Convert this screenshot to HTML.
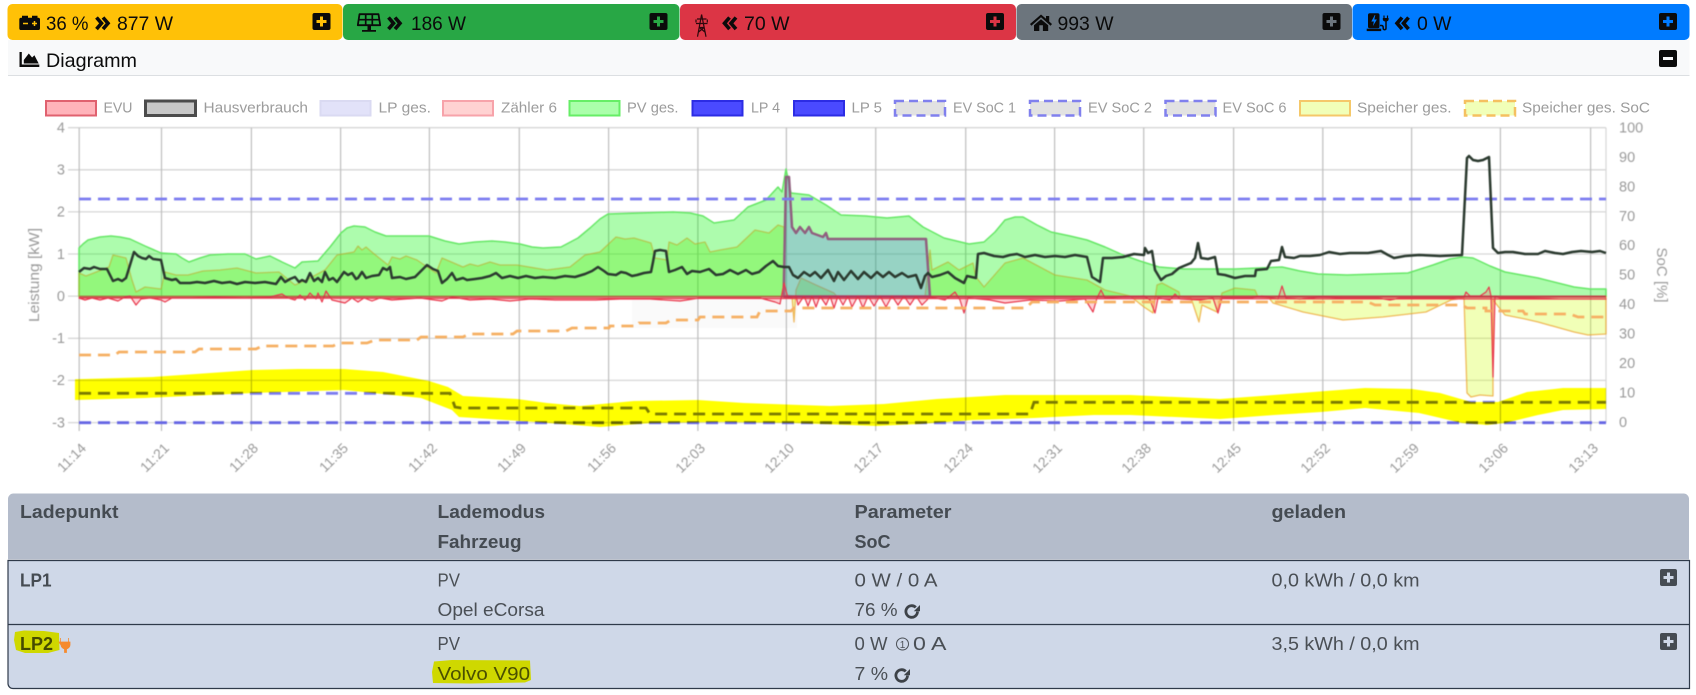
<!DOCTYPE html>
<html lang="de">
<head>
<meta charset="utf-8">
<title>Diagramm</title>
<style>
html,body{margin:0;padding:0;background:#fff;width:1696px;height:695px;overflow:hidden}
svg{display:block}
text{font-family:"Liberation Sans",Arial,"DejaVu Sans",sans-serif}
.bar{font-size:19.5px;fill:#0b0b0b}
.lg{font-size:14.5px;fill:#9c9c9c}
.ax{font-size:14.5px;fill:#9a9a9a}
.xl{font-size:14px;fill:#9a9a9a}
.th{font-size:18px;font-weight:bold;fill:#454b52}
.td{font-size:18px;fill:#4a4f55}
.tb{font-size:18px;font-weight:bold;fill:#454b52}
.mul{mix-blend-mode:multiply}
</style>
</head>
<body>
<svg width="1696" height="695" viewBox="0 0 1696 695" xmlns="http://www.w3.org/2000/svg">
<defs>
<clipPath id="pos"><rect x="70" y="120" width="1540" height="176.500"/></clipPath>
<clipPath id="neg"><rect x="70" y="296.500" width="1540" height="130"/></clipPath>
<path id="sp" stroke-width="1.300" stroke-linejoin="round" d="M79 296.500V273L86 276L109 267L113 255L126 258L132 280L136 292L145 287L161 289L165 272L176 275L188 275L203 271L220 270L237 268L256 273L279 272L295 285L310 278L325 270L337 255L354 252L358 246L362 250L366 247L373 253L388 265L392 257L400 259L406 256L417 260L436 273L442 258L463 267L470 264L478 266L490 262L500 265L517 265L547 270L570 267L585 255L600 252L616 237L625 239L634 238L651 243L655 258L667 260L669 242L677 245L687 238L695 244L705 242L710 252L720 250L737 247L755 230L769 233L778 225L784 227L785 295L792 296L794 322L796 290L801 278L816 285L834 293L837 296.500L925 296.500L930 250L932 270L948 262L959 270L973 263L976 277L984 287L1005 263L1023 258L1055 275L1087 280L1105 290L1130 296L1144 307L1153 313L1157 285L1162 283L1179 292L1180 297L1191 298L1199 322L1202 305L1217 312L1222 293L1235 288L1255 290L1258 297L1269 298L1273 303L1303 312L1343 320L1383 317L1426 312L1451 300L1464 298L1467 393L1471 397L1480 395L1493 396L1493 300L1505 315L1525 319L1538 322L1574 332L1588 335L1606 334V296.500Z"/>
</defs>
<rect width="1696" height="695" fill="#fff"/>

<!-- top bars -->
<rect x="7.5" y="4" width="335" height="36" rx="5" fill="#ffc107"/>
<rect x="343" y="4" width="336.5" height="36" rx="5" fill="#28a745"/>
<rect x="680" y="4" width="336" height="36" rx="5" fill="#dc3545"/>
<rect x="1016.5" y="4" width="335.5" height="36" rx="5" fill="#6c757d"/>
<rect x="1352.5" y="4" width="337" height="36" rx="5" fill="#007bff"/>

<!-- battery icon -->
<path d="M22 15.700h6v2.500h-6zM32 15.700h5.500v2.500h-5.500z" fill="#0b0b0b"/>
<rect x="19.300" y="17.700" width="20.700" height="12.300" rx="1.800" fill="#0b0b0b"/>
<path d="M23 23.500h5M32 23.500h5M34.500 21v5" stroke="#ffc107" stroke-width="1.500" fill="none"/>
<text class="bar" x="46" y="30" textLength="42.5" lengthAdjust="spacingAndGlyphs">36 %</text>
<path d="M96.500 17.500l5 5.800-5 5.800M103 17.500l5 5.800-5 5.800" stroke="#0b0b0b" stroke-width="3.600" fill="none"/>
<text class="bar" x="117" y="30" textLength="56" lengthAdjust="spacingAndGlyphs">877 W</text>

<!-- solar icon -->
<path d="M359.500 14.200h19l1.700 11h-22.400z" fill="none" stroke="#0b0b0b" stroke-width="1.800" stroke-linejoin="round"/>
<path d="M358.500 19.700h21M365.700 14v11M372.300 14v11" stroke="#0b0b0b" stroke-width="1.700" fill="none"/>
<path d="M367.500 26h3.500v4h-3.500zM362 30h14v1.800h-14z" fill="#0b0b0b"/>
<path d="M388.500 17.500l5 5.800-5 5.800M395 17.500l5 5.800-5 5.800" stroke="#0b0b0b" stroke-width="3.600" fill="none"/>
<text class="bar" x="411" y="30" textLength="55" lengthAdjust="spacingAndGlyphs">186 W</text>

<!-- tower icon -->
<path d="M701.600 14.500L697.500 36.700M701.600 14.500L706 36.700M697 19h9.500M696 23.500h11.500M696 19.500v3M707.300 19.500v3M699.500 27.500h4.500M699.500 27.500l6 5M704 27.500l-6 5" stroke="#2b080c" stroke-width="1.200" fill="none"/>
<path d="M729.500 17.500l-5 5.800 5 5.800M736 17.500l-5 5.800 5 5.800" stroke="#0b0b0b" stroke-width="3.600" fill="none"/>
<text class="bar" x="744" y="30" textLength="45.500" lengthAdjust="spacingAndGlyphs">70 W</text>

<!-- home icon -->
<path d="M1041 14.500l5 4.300V16h3.200v5.500l2.800 2.500-1.400 1.700L1041 17.300 1031.400 25.700 1030 24z" fill="#0b0b0b"/>
<path d="M1041 19.300l-7 6V31h5.300v-5.800h3.600V31h5.300v-5.700z" fill="#0b0b0b"/>
<text class="bar" x="1057.500" y="30" textLength="56" lengthAdjust="spacingAndGlyphs">993 W</text>

<!-- charging station icon -->
<rect x="1368" y="13.300" width="11.500" height="15" rx="1.800" fill="#0b0b0b"/>
<rect x="1366.700" y="28.700" width="14.500" height="2.400" fill="#0b0b0b"/>
<path d="M1374.800 15l-3.500 6.500h2.600l-1 4.500 4-6.500h-2.600l1-4.500z" fill="#007bff"/>
<path d="M1380 25.500h1.500c1.300 0 1.700 1 1.700 2v.8c0 1.900 2.800 1.900 2.800 0V21" stroke="#0b0b0b" stroke-width="1.500" fill="none"/>
<path d="M1384 15.500v2.500M1387.500 15.500v2.500" stroke="#0b0b0b" stroke-width="1.200" fill="none"/>
<path d="M1382.800 18h5.800v1.500c0 1-1.200 2-2.900 2s-2.900-1-2.900-2z" fill="#0b0b0b"/>
<path d="M1402 17.500l-5 5.800 5 5.800M1408.500 17.500l-5 5.800 5 5.800" stroke="#0b0b0b" stroke-width="3.600" fill="none"/>
<text class="bar" x="1417" y="30" textLength="34.500" lengthAdjust="spacingAndGlyphs">0 W</text>

<!-- plus buttons -->
<g>
<rect x="312.500" y="13" width="18" height="17" rx="2" fill="#0b0b0b"/><path d="M321.500 16.500v10M316.500 21.500h10" stroke="#ffc107" stroke-width="3"/>
<rect x="649.500" y="13" width="18" height="17" rx="2" fill="#0b0b0b"/><path d="M658.500 16.500v10M653.500 21.500h10" stroke="#28a745" stroke-width="3"/>
<rect x="986" y="13" width="18" height="17" rx="2" fill="#0b0b0b"/><path d="M995 16.500v10M990 21.500h10" stroke="#dc3545" stroke-width="3"/>
<rect x="1322.500" y="13" width="18" height="17" rx="2" fill="#0b0b0b"/><path d="M1331.500 16.500v10M1326.500 21.500h10" stroke="#6c757d" stroke-width="3"/>
<rect x="1659" y="13" width="18" height="17" rx="2" fill="#0b0b0b"/><path d="M1668 16.500v10M1663 21.500h10" stroke="#007bff" stroke-width="3"/>
</g>

<!-- Diagramm header -->
<rect x="8" y="40" width="1681.500" height="35" fill="#f8f9fa"/>
<rect x="8" y="75" width="1681.500" height="1" fill="#dcdfe2"/>
<path d="M19.500 52h2.300v12.500h17.500V67H19.500z" fill="#0b0b0b"/>
<path d="M23.800 63.500v-3.500l5-6.500 3.300 4 2.300-2.200 4.300 8.200z" fill="#0b0b0b"/>
<text x="46" y="67" font-size="19.500" fill="#0b0b0b" textLength="91" lengthAdjust="spacingAndGlyphs">Diagramm</text>
<rect x="1659" y="50" width="18" height="17" rx="2" fill="#0b0b0b"/>
<path d="M1663 58.500h10" stroke="#f8f9fa" stroke-width="3"/>

<g style="filter:blur(.3px)">
<!-- legend -->
<g stroke-width="2">
<rect x="46" y="101" width="50" height="14.500" fill="#ffb3ba" stroke="#e0616f"/>
<rect x="145.500" y="101" width="50" height="14.500" fill="#c8c8c8" stroke="#4c4c4c" stroke-width="3"/>
<rect x="320.500" y="101" width="50" height="14.500" fill="#e2e2f9" stroke="#dadaf2"/>
<rect x="443" y="101" width="50" height="14.500" fill="#ffd2d2" stroke="#f7a3aa"/>
<rect x="569.500" y="101" width="50" height="14.500" fill="#aaffaa" stroke="#66ee66"/>
<rect x="692.500" y="101" width="50" height="14.500" fill="#4a4aff" stroke="#2c2ce4"/>
<rect x="794" y="101" width="50" height="14.500" fill="#4a4aff" stroke="#2c2ce4"/>
<rect x="895" y="101" width="50" height="14.500" fill="#e2e2e2" stroke="#8080ee" stroke-dasharray="9 5" stroke-width="2.500"/>
<rect x="1030" y="101" width="50" height="14.500" fill="#e2e2e2" stroke="#8080ee" stroke-dasharray="9 5" stroke-width="2.500"/>
<rect x="1165.500" y="101" width="50" height="14.500" fill="#e2e2e2" stroke="#8080ee" stroke-dasharray="9 5" stroke-width="2.500"/>
<rect x="1300" y="101" width="50" height="14.500" fill="#f1ffb8" stroke="#f5c86a"/>
<rect x="1465" y="101" width="50" height="14.500" fill="#f1ffb8" stroke="#f5c060" stroke-dasharray="9 5" stroke-width="2.500"/>
</g>
<g class="lg">
<text class="lg" x="103.500" y="112.500" textLength="29" lengthAdjust="spacingAndGlyphs">EVU</text>
<text class="lg" x="203.500" y="112.500" textLength="104.500" lengthAdjust="spacingAndGlyphs">Hausverbrauch</text>
<text class="lg" x="378.500" y="112.500" textLength="52.500" lengthAdjust="spacingAndGlyphs">LP ges.</text>
<text class="lg" x="501" y="112.500" textLength="56" lengthAdjust="spacingAndGlyphs">Zähler 6</text>
<text class="lg" x="627" y="112.500" textLength="51.500" lengthAdjust="spacingAndGlyphs">PV ges.</text>
<text class="lg" x="751" y="112.500" textLength="29" lengthAdjust="spacingAndGlyphs">LP 4</text>
<text class="lg" x="851.500" y="112.500" textLength="30.500" lengthAdjust="spacingAndGlyphs">LP 5</text>
<text class="lg" x="953" y="112.500" textLength="63" lengthAdjust="spacingAndGlyphs">EV SoC 1</text>
<text class="lg" x="1088" y="112.500" textLength="64" lengthAdjust="spacingAndGlyphs">EV SoC 2</text>
<text class="lg" x="1222.500" y="112.500" textLength="64" lengthAdjust="spacingAndGlyphs">EV SoC 6</text>
<text class="lg" x="1357" y="112.500" textLength="94.500" lengthAdjust="spacingAndGlyphs">Speicher ges.</text>
<text class="lg" x="1522" y="112.500" textLength="128" lengthAdjust="spacingAndGlyphs">Speicher ges. SoC</text>
</g>
</g>

<!-- chart -->
<g style="filter:blur(.4px)">
<rect x="632" y="300" width="165" height="28" fill="#fafafa"/>
<!-- grid -->
<g stroke="#d6d6d6" stroke-width="1.300" fill="none">
<path d="M68 127.700H1606M68 169.800H1606M68 211.900H1606M68 254H1606M68 296.100H1606M68 338.300H1606M68 380.400H1606M68 422.600H1606"/>
</g>
<g stroke="#bdbdbd" stroke-width="1.200" fill="none">
<path d="M79.200 127.700V431M161.500 127.700V431M251.400 127.700V431M340.600 127.700V431M429.400 127.700V431M519.300 127.700V431M608.600 127.700V431M697.900 127.700V431M786.400 127.700V431M875.700 127.700V431M965.700 127.700V431M1054.600 127.700V431M1143.700 127.700V431M1233.600 127.700V431M1322.800 127.700V431M1411.600 127.700V431M1500.400 127.700V431M1590.600 127.700V431"/>
<path d="M1606 127.700V422.600" stroke="#d6d6d6"/>
</g>

<!-- PV -->
<path fill="rgba(0,245,0,.32)" stroke="#66e766" stroke-width="1.500" stroke-linejoin="round" d="M79 296.500V248L83 244L88 240L100 237L111 236L120 237L130 239L145 246L161 253L176 254L182 258L189 262L200 258L210 255L228 254L245 254L256 259L270 256L282 262L295 268L302 262L318 261L330 247L341 233L347 228L354 226L365 227L375 232L386 236L405 236L429 236L445 241L459 244L475 242L492 241L505 242L520 244L532 247L543 248L561 247L578 238L590 228L600 219L608 214L640 213L673 212L690 213L703 216L714 223L734 220L748 207L766 200L778 187L782 192L786 169L791 193L809 195L826 205L841 215L866 216L887 218L909 216L923 227L944 238L969 244L984 242L995 232L1005 220L1015 217L1023 217L1037 225L1051 232L1070 236L1087 240L1105 247L1123 255L1140 261L1159 267L1184 269L1235 269L1282 267L1300 271L1318 274L1347 275L1408 273L1433 265L1450 259L1462 257L1473 258L1490 266L1505 272L1538 278L1574 287L1590 289L1606 289V296.500Z"/>

<!-- Speicher: positive part greener, negative part pale yellow -->
<use href="#sp" clip-path="url(#pos)" fill="rgba(90,235,20,.32)" stroke="rgba(190,170,40,.6)"/>
<use href="#sp" clip-path="url(#neg)" fill="rgba(208,255,18,.3)" stroke="rgba(235,160,40,.72)"/>

<!-- LP area -->
<path fill="rgba(90,100,255,.27)" stroke="#90607f" stroke-width="2.500" stroke-linejoin="round" d="M783.600 296.500L786 177L789 177L792 227L796 233L800 227L805 233L809 227L812 233L823 237L826 233L828 239L926 239L930 296.500Z"/>
<path d="M784 296.500H930" stroke="#4a4ad8" stroke-width="1.200" fill="none"/>

<!-- EVU -->
<path fill="rgba(255,80,100,.25)" stroke="#e8384c" stroke-width="1.200" stroke-linejoin="round" d="M79 298L85 300L92 298L100 300L108 298L118 301L125 297L130 296L136 305L141 299L150 298L161 300L165 302L172 298L190 298L215 297L245 298L270 297L282 294L288 298L295 300L300 295L305 300L310 293L316 299L318 293L322 302L326 291L332 300L345 303L352 298L358 302L364 298L372 301L380 298L392 300L420 298L442 301L452 297L470 300L490 299L510 301L530 299L555 300L596 300L620 299L650 299L680 301L700 298L760 298L775 302L780 304L784 283L788 298L796 296L798 305L804 296L808 306L812 296L816 307L820 296L826 305L830 296L834 308L838 296L843 305L848 296L852 307L858 296L863 308L868 296L874 306L880 296L886 307L892 296L898 305L904 296L910 305L916 296L922 305L930 297L945 300L955 292L960 300L964 313L968 298L990 300L1005 303L1030 300L1060 301L1085 299L1093 312L1097 298L1101 290L1105 298L1120 297L1144 296L1150 300L1155 313L1158 298L1170 300L1175 294L1180 299L1200 300L1213 298L1218 313L1222 298L1250 298L1262 296L1278 299L1282 286L1286 298L1300 299L1320 297L1345 298L1378 298L1390 300L1400 298L1450 298L1464 297L1466 292L1470 296L1480 296L1486 292L1489 287L1491 296L1493 377L1495 296L1500 298L1530 298L1560 299L1606 299Z"/>
<path d="M79 296.700H784" stroke="#c43049" stroke-width="1.900" opacity=".65" fill="none"/>
<path d="M784 296.700H1606" stroke="#c43049" stroke-width="2.300" opacity=".85" fill="none"/>

<!-- Orange SoC dashed -->
<path fill="none" stroke="#f6b063" stroke-width="2.800" stroke-dasharray="12 7" d="M79 355H115L119 352H195L199 349H256L262 346H333L339 343H367L375 340H417L421 337H463L469 334H513L517 331H566L572 328H609L610 326H637L639 323H666L671 320H698L700 317H734H757L760 311H791L794 308H962H1026L1032 302H1130H1289L1301 302H1368L1375 305H1462L1467 308H1486V311H1523L1525 314H1570L1578 317H1606"/>

<!-- EV SoC dashed -->
<g fill="none" stroke="#7b7bf0" stroke-width="2.800" stroke-dasharray="12 7">
<path d="M79 199H1606"/>
<path d="M79 393.300H450L455 407L461 408H646L650 414H1030L1034 402.300H1606"/>
<path d="M79 422.700H1606" stroke="#6565e4"/>
</g>

<!-- Hausverbrauch -->
<path fill="none" stroke="#2b3a2f" stroke-width="2.500" stroke-linejoin="round" d="M79 272L84 268L90 269L94 267L100 269L107 269L113 281L118 279L122 281L126 278L130 265L134 252L138 256L142 258L146 259L149 256L153 259L161 260L165 278L172 280L176 279L180 283L190 283L197 282L205 283L214 281L222 283L230 282L237 284L245 282L255 283L265 282L276 284L281 277L285 282L290 279L295 277L299 282L302 280L306 282L310 273L314 281L318 278L322 282L325 272L329 280L333 278L337 282L344 272L348 275L352 273L356 279L358 278L362 272L366 278L372 276L379 275L383 268L387 270L390 267L392 278L400 277L406 279L415 277L422 270L427 265L433 269L438 271L442 283L447 279L452 273L456 280L463 278L467 280L475 279L482 278L490 276L496 273L502 278L510 276L518 278L526 276L535 278L543 277L555 278L565 276L575 277L585 274L592 271L598 267L604 271L608 274L616 275L621 272L626 273L632 276L637 275L644 273L651 272L653 262L655 251L660 250L666 251L669 272L675 270L682 267L687 274L692 271L700 272L709 269L716 275L723 274L730 270L738 274L746 270L752 274L759 272L766 266L773 261L778 266L784 267L789 267L793 275L798 278L804 272L810 276L815 272L821 278L828 270L834 281L838 272L844 280L851 271L858 279L864 272L871 278L877 272L883 277L889 272L895 277L902 273L908 277L916 275L921 288L925 276L928 273L932 277L940 275L948 272L955 278L964 283L967 276L976 278L978 254L984 253L994 256L1003 257L1010 255L1017 254L1025 257L1035 255L1045 257L1055 256L1065 257L1075 255L1087 257L1092 277L1100 282L1103 258L1112 258L1123 257L1134 254L1144 255L1145 248L1148 253L1152 251L1155 270L1161 280L1166 276L1172 274L1179 268L1191 263L1195 258L1198 243L1201 258L1208 259L1215 257L1218 274L1225 275L1235 278L1245 276L1255 276L1256 270L1267 269L1271 261L1279 260L1282 247L1285 257L1294 258L1300 256L1310 256L1320 255L1329 252L1340 254L1350 253L1368 253L1381 251L1388 255L1394 258L1405 256L1419 255L1440 256L1462 255L1467 158L1469 156L1473 160L1478 161L1483 160L1489 157L1493 248L1498 253L1505 252L1513 252L1525 254L1538 254L1545 251L1555 253L1563 254L1572 252L1581 251L1592 252L1600 251L1606 253"/>

<!-- yellow highlight band -->
<path class="mul" fill="#ffff00" d="M75 379.300L153 377L253 370L298 369L344 369L383 372L429 381L448 387L463 396L517 399L547 403L580 406L634 401L698 400L744 403L830 406L884 404L937 399L1005 395L1130 395L1220 399L1274 395L1365 388L1412 389L1440 393L1471 402L1498 402L1527 392L1563 388L1606 388V409L1563 410L1538 415L1505 423L1487 425L1462 423L1419 413L1365 408L1321 412L1274 415L1220 419L1130 415L1094 415L1034 418L973 420L919 424L876 426L794 423L723 422L651 423L600 427L536 422L459 417L452 410L421 398L344 390L253 393L145 398L75 400Z"/>

<!-- axis labels -->
<g class="ax">
<text class="ax" x="65" y="132.500" text-anchor="end">4</text>
<text class="ax" x="65" y="174.500" text-anchor="end">3</text>
<text class="ax" x="65" y="216.500" text-anchor="end">2</text>
<text class="ax" x="65" y="259" text-anchor="end">1</text>
<text class="ax" x="65" y="301" text-anchor="end">0</text>
<text class="ax" x="65" y="343" text-anchor="end">-1</text>
<text class="ax" x="65" y="385" text-anchor="end">-2</text>
<text class="ax" x="65" y="427.500" text-anchor="end">-3</text>
<text class="ax" x="1619" y="132.500">100</text>
<text class="ax" x="1619" y="162">90</text>
<text class="ax" x="1619" y="191.500">80</text>
<text class="ax" x="1619" y="221">70</text>
<text class="ax" x="1619" y="250">60</text>
<text class="ax" x="1619" y="279.500">50</text>
<text class="ax" x="1619" y="309">40</text>
<text class="ax" x="1619" y="338.500">30</text>
<text class="ax" x="1619" y="368">20</text>
<text class="ax" x="1619" y="397.500">10</text>
<text class="ax" x="1619" y="427">0</text>
<text class="ax" transform="translate(39,275) rotate(-90)" text-anchor="middle" textLength="94" lengthAdjust="spacingAndGlyphs">Leistung [kW]</text>
<text class="ax" transform="translate(1657,275) rotate(90)" text-anchor="middle" textLength="55" lengthAdjust="spacingAndGlyphs">SoC [%]</text>
</g>
<g>
<text class="xl" text-anchor="end" transform="translate(87,449) rotate(-45)">11:14</text>
<text class="xl" text-anchor="end" transform="translate(170,449) rotate(-45)">11:21</text>
<text class="xl" text-anchor="end" transform="translate(259,449) rotate(-45)">11:28</text>
<text class="xl" text-anchor="end" transform="translate(349,449) rotate(-45)">11:35</text>
<text class="xl" text-anchor="end" transform="translate(438,449) rotate(-45)">11:42</text>
<text class="xl" text-anchor="end" transform="translate(527,449) rotate(-45)">11:49</text>
<text class="xl" text-anchor="end" transform="translate(617,449) rotate(-45)">11:56</text>
<text class="xl" text-anchor="end" transform="translate(706,449) rotate(-45)">12:03</text>
<text class="xl" text-anchor="end" transform="translate(795,449) rotate(-45)">12:10</text>
<text class="xl" text-anchor="end" transform="translate(884,449) rotate(-45)">12:17</text>
<text class="xl" text-anchor="end" transform="translate(974,449) rotate(-45)">12:24</text>
<text class="xl" text-anchor="end" transform="translate(1063,449) rotate(-45)">12:31</text>
<text class="xl" text-anchor="end" transform="translate(1152,449) rotate(-45)">12:38</text>
<text class="xl" text-anchor="end" transform="translate(1242,449) rotate(-45)">12:45</text>
<text class="xl" text-anchor="end" transform="translate(1331,449) rotate(-45)">12:52</text>
<text class="xl" text-anchor="end" transform="translate(1420,449) rotate(-45)">12:59</text>
<text class="xl" text-anchor="end" transform="translate(1509,449) rotate(-45)">13:06</text>
<text class="xl" text-anchor="end" transform="translate(1599,449) rotate(-45)">13:13</text>
</g>
</g>

<!-- table -->
<path d="M8 559.500V499a5.500 5.500 0 0 1 5.500-5.500H1683.500a5.500 5.500 0 0 1 5.500 5.500V559.500Z" fill="#b4bccb"/>
<path d="M8 560.500H1689.500V688.500H13a5 5 0 0 1-5-5Z" fill="#cfd8e8" stroke="#2f3a4a" stroke-width="1.200"/>
<path d="M8 624.500H1689.500" stroke="#2f3a4a" stroke-width="1.200"/>

<text class="th" x="20" y="518" textLength="98.500" lengthAdjust="spacingAndGlyphs">Ladepunkt</text>
<text class="th" x="437.500" y="518" textLength="107.500" lengthAdjust="spacingAndGlyphs">Lademodus</text>
<text class="th" x="854.500" y="518" textLength="97" lengthAdjust="spacingAndGlyphs">Parameter</text>
<text class="th" x="1271.500" y="518" textLength="74.500" lengthAdjust="spacingAndGlyphs">geladen</text>
<text class="th" x="437.500" y="548" textLength="84" lengthAdjust="spacingAndGlyphs">Fahrzeug</text>
<text class="th" x="854.500" y="548" textLength="36" lengthAdjust="spacingAndGlyphs">SoC</text>

<!-- row 1 -->
<text class="tb" x="20" y="586.500" textLength="31.500" lengthAdjust="spacingAndGlyphs">LP1</text>
<text class="td" x="437.500" y="586.500" textLength="22.500" lengthAdjust="spacingAndGlyphs">PV</text>
<text class="td" x="437.500" y="616" textLength="107" lengthAdjust="spacingAndGlyphs">Opel eCorsa</text>
<text class="td" x="854.500" y="586.500" textLength="83" lengthAdjust="spacingAndGlyphs">0 W / 0 A</text>
<text class="td" x="854.500" y="616" textLength="43" lengthAdjust="spacingAndGlyphs">76 %</text>
<path d="M917.500 611.500a5.800 5.800 0 1 1-1.700-4.100" stroke="#3d4248" stroke-width="2.800" fill="none"/>
<path d="M920 605v6.200h-6.200z" fill="#3d4248"/>
<text class="td" x="1271.500" y="586.500" textLength="148" lengthAdjust="spacingAndGlyphs">0,0 kWh / 0,0 km</text>
<rect x="1660" y="569" width="17" height="17" rx="2" fill="#454b52"/>
<path d="M1668.500 572.500v10M1663.500 577.500h10" stroke="#cfd8e8" stroke-width="3"/>

<!-- row 2 -->
<text class="tb" x="20" y="650" textLength="33" lengthAdjust="spacingAndGlyphs">LP2</text>
<path class="mul" fill="#ffff00" d="M15 632L24 630.500L44 631L59 633L59.500 650L48 653L25 653L16 650L14 640Z"/>
<path d="M60.500 638v4M68.500 638v4M59 642h11v3c0 2-2 3.500-3.500 4v3.500h-2V649c-1.500-.5-3.500-2-3.500-4z" fill="#f58a2e" stroke="#f58a2e" stroke-width=".8"/>
<text class="td" x="437.500" y="650" textLength="22.500" lengthAdjust="spacingAndGlyphs">PV</text>
<text class="td" x="437.500" y="680" textLength="92.500" lengthAdjust="spacingAndGlyphs">Volvo V90</text>
<path class="mul" fill="#ffff00" d="M434 661.500L452 660L530 660.500L531 680L525 682.500L470 683.500L433 683L432 672Z"/>
<text class="td" x="854.500" y="650" textLength="33" lengthAdjust="spacingAndGlyphs">0 W</text>
<circle cx="902.500" cy="644" r="6" fill="none" stroke="#4a4f55" stroke-width="1"/>
<text x="902.500" y="648" font-size="10" fill="#4a4f55" text-anchor="middle">1</text>
<text class="td" x="913" y="650" textLength="33.500" lengthAdjust="spacingAndGlyphs">0 A</text>
<text class="td" x="854.500" y="680" textLength="33.500" lengthAdjust="spacingAndGlyphs">7 %</text>
<path d="M907.500 675.500a5.800 5.800 0 1 1-1.700-4.100" stroke="#3d4248" stroke-width="2.800" fill="none"/>
<path d="M910 669v6.200h-6.200z" fill="#3d4248"/>
<text class="td" x="1271.500" y="650" textLength="148" lengthAdjust="spacingAndGlyphs">3,5 kWh / 0,0 km</text>
<rect x="1660" y="633" width="17" height="17" rx="2" fill="#454b52"/>
<path d="M1668.500 636.500v10M1663.500 641.500h10" stroke="#cfd8e8" stroke-width="3"/>
</svg>
</body>
</html>
